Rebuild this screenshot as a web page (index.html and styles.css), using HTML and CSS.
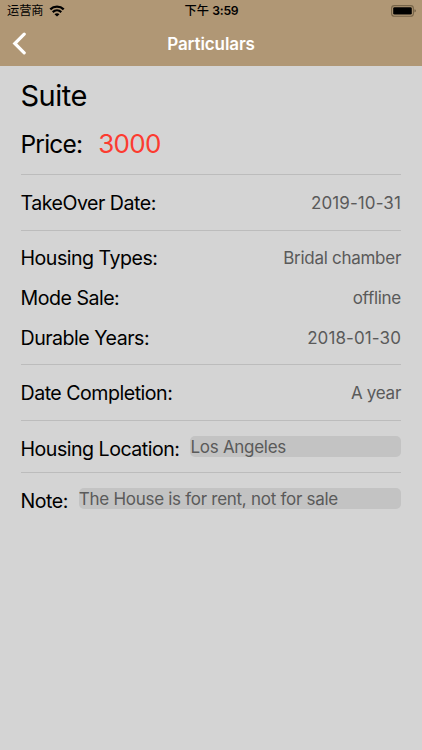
FILE: index.html
```html
<!DOCTYPE html>
<html lang="en">
<head>
    <meta charset="UTF-8">
    <meta name="viewport" content="width=device-width, initial-scale=1.0">
    <title>Particulars</title>
    <link rel="stylesheet" href="styles.css">
</head>
<body>
    <header class="header">
        <div class="status-bar">
            <div class="carrier">
                <span>运营商</span>
                <svg class="wifi" width="16" height="12" viewBox="0 0 16 12">
                    <path d="M1.3 4.4C5 .8 11 .8 14.7 4.4" fill="none" stroke="#000" stroke-width="2.3"/>
                    <path d="M3.7 7.1C6.2 4.9 9.8 4.9 12.3 7.1" fill="none" stroke="#000" stroke-width="2.2"/>
                    <path d="M8 11.6L5.5 9.2C7 8 9 8 10.5 9.2Z" fill="#000"/>
                </svg>
            </div>
            <div class="time">下午 <b>3:59</b></div>
            <svg class="battery" width="26" height="12" viewBox="0 0 26 12">
                <rect x="1.6" y="0.6" width="21.8" height="10.6" rx="2.8" fill="none" stroke="#766449" stroke-width="1.1"/>
                <rect x="3.2" y="2.2" width="18.6" height="7.4" rx="1.4" fill="#000"/>
                <path d="M24.6 4.3C26 4.7 26 7.1 24.6 7.5Z" fill="#54452f"/>
            </svg>
        </div>
        <nav class="nav-bar">
            <svg class="back" width="16" height="24" viewBox="0 0 16 24">
                <path d="M12.2 2.2L2.8 11.5L12.2 20.8" fill="none" stroke="#fff" stroke-width="3.2" stroke-linecap="round" stroke-linejoin="miter"/>
            </svg>
            <h1 class="title">Particulars</h1>
        </nav>
    </header>
    <main class="content">
        <section class="section summary">
            <h2 class="name">Suite</h2>
            <div class="price-row">
                <span class="price-label">Price:</span>
                <span class="price">3000</span>
            </div>
        </section>
        <section class="section">
            <div class="row"><span class="label">TakeOver Date:</span><span class="value date">2019-10-31</span></div>
        </section>
        <section class="section types">
            <div class="row"><span class="label">Housing Types:</span><span class="value">Bridal chamber</span></div>
            <div class="row"><span class="label">Mode Sale:</span><span class="value">offline</span></div>
            <div class="row"><span class="label">Durable Years:</span><span class="value date">2018-01-30</span></div>
        </section>
        <section class="section">
            <div class="row"><span class="label">Date Completion:</span><span class="value">A year</span></div>
        </section>
        <section class="section field-section">
            <span class="label">Housing Location:</span>
            <div class="field">Los Angeles</div>
        </section>
        <section class="section field-section last">
            <span class="label">Note:</span>
            <div class="field">The House is for rent, not for sale</div>
        </section>
    </main>
</body>
</html>
```
FILE: styles.css
```css
* {
    box-sizing: border-box;
}

body {
    margin: 0;
    min-height: 750px;
    background: #d4d4d4;
    color: #000;
    font-family: Inter, "Noto Sans CJK SC", sans-serif;
}

.header {
    height: 66px;
    background: #b09775;
}

.status-bar {
    display: grid;
    grid-template-columns: 1fr auto 1fr;
    align-items: center;
    height: 22px;
    padding: 0 6px 0 7px;
    font-size: 12.2px;
    line-height: 22px;
}

.carrier {
    display: flex;
    align-items: center;
    gap: 5px;
}

.time {
    font-weight: 500;
}

.time b {
    font-weight: 600;
    letter-spacing: -0.2px;
}

.battery {
    justify-self: end;
}

.nav-bar {
    display: grid;
    grid-template-columns: 40px 1fr 40px;
    align-items: center;
    height: 43px;
}

.back {
    margin-left: 12px;
}

.title {
    margin: 0;
    color: #fff;
    font-size: 17px;
    font-weight: 600;
    letter-spacing: -0.1px;
    line-height: 20px;
    text-align: center;
}

.content {
    padding: 0 21px 0 20.5px;
}

.section {
    padding: 8px 0 7px;
    border-bottom: 1px solid #bcbcbc;
}

.summary {
    height: 109px;
    padding: 12px 0 0;
}

.name {
    margin: 0;
    font-size: 29px;
    font-weight: 400;
    letter-spacing: -0.5px;
    line-height: 36px;
}

.price-row {
    display: flex;
    align-items: center;
    gap: 16px;
    margin-top: 12px;
    line-height: 36px;
}

.price-label {
    font-size: 24.5px;
    letter-spacing: -0.8px;
}

.price {
    color: #fc3b30;
    font-size: 26px;
    letter-spacing: -0.7px;
}

.row {
    display: flex;
    align-items: center;
    justify-content: space-between;
    height: 40px;
}

.types {
    padding: 7px 0 6px;
}

.label {
    font-size: 19.6px;
    letter-spacing: -0.5px;
    white-space: nowrap;
}

.value {
    color: #5a5a5a;
    font-size: 17px;
    letter-spacing: -0.28px;
}

.date {
    letter-spacing: 0.1px;
}

.field-section {
    display: flex;
    align-items: center;
    gap: 11px;
    height: 52px;
    padding: 0;
}

.field-section .label {
    padding-top: 4px;
}

.field {
    flex: 1;
    height: 21px;
    border-radius: 5px;
    background: #c3c3c3;
    color: #5a5a5a;
    font-size: 17px;
    letter-spacing: -0.28px;
    line-height: 23px;
    white-space: nowrap;
}

.last {
    height: 51px;
    border-bottom: none;
}
```
